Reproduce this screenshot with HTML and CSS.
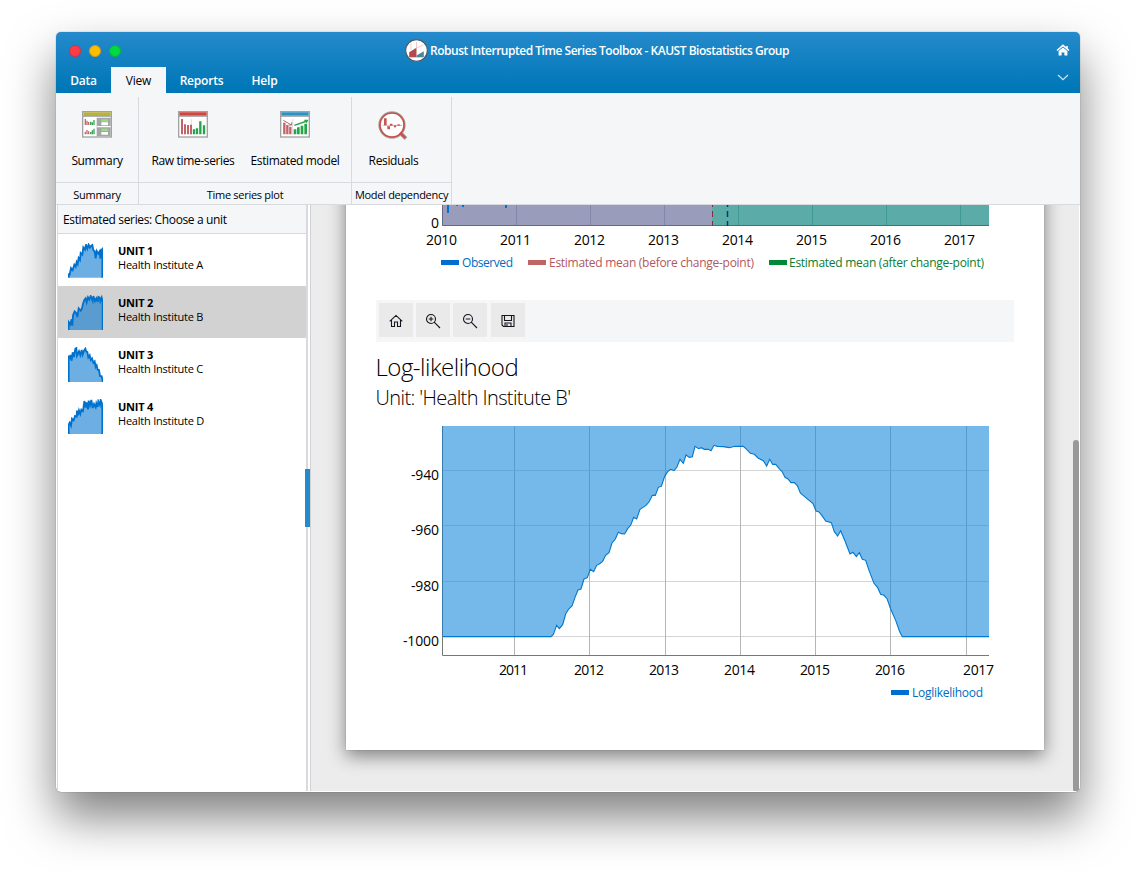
FILE: index.html
```html
<!DOCTYPE html>
<html lang="en">
<head>
<meta charset="utf-8">
<title>Robust Interrupted Time Series Toolbox</title>
<link rel="stylesheet" href="styles.css">
</head>
<body>
<div class="window">
  <header class="titlebar">
    <div class="title-row">
      <div class="lights"><i class="light red"></i><i class="light yellow"></i><i class="light green"></i></div>
      <div class="app-title">
        <svg class="logo" width="23" height="23" viewBox="0 0 66 66"><circle cx="33" cy="33" r="31" fill="#fff" stroke="#50555c" stroke-width="3"/><path d="M12 38L33 25V52H12Z" fill="#b04a50"/><path d="M33 47L54 35V52H33Z" fill="#4b8797"/><path d="M17 14v16M33 8v20M33 26l20-9" stroke="#e6b4b4" stroke-width="2" fill="none"/><path d="M11 53H54" stroke="#b9c0c5" stroke-width="2"/></svg>
        <span>Robust Interrupted Time Series Toolbox - KAUST Biostatistics Group</span>
      </div>
      <svg class="home" width="14" height="12" viewBox="0 0 14 12"><path d="M1 6.500L7 1.400l6 5.100M11 2v3" fill="none" stroke="#fff" stroke-width="1.600"/><path d="M2.600 7L7 3.400 11.400 7v4.600H8.400V8.500H5.600v3.100h-3z" fill="#fff"/></svg>
    </div>
    <nav class="tabs">
      <span class="tab data">Data</span><span class="tab active">View</span><span class="tab reports">Reports</span><span class="tab help">Help</span>
      <svg class="chevron" width="12" height="7" viewBox="0 0 12 7"><path d="M1 1l5 4.600L11 1" fill="none" stroke="#cfe6f5" stroke-width="1.200"/></svg>
    </nav>
  </header>

  <section class="ribbon">
    <div class="group g1">
      <div class="tools">
        <div class="tool">
          <svg width="30" height="27" viewBox="0 0 90 81"><rect x="2" y="2" width="86" height="76" fill="#fff" stroke="#a2a2a2" stroke-width="4"/><path d="M4 4h82v11H4z" fill="#b9b23c"/><path d="M3 16h84" stroke="#a2a2a2" stroke-width="3"/><path d="M44 20h42v56H44z" fill="#a5a5a5"/><path d="M45 47h41" stroke="#fff" stroke-width="4"/><path d="M58 25h20v7H58zM58 53h20v7H58z" fill="#8ae67c"/><path d="M58 34h20v9H58zM58 63h20v8H58z" fill="#fff"/><path d="M10 24v18M15 29v13M20 33v9M10 62v8M15 57v13M20 61v9" stroke="#c06a70" stroke-width="4"/><path d="M26 32v10M31 34v8M36 27v15M26 63v7M31 58v12M36 53v17" stroke="#37a455" stroke-width="4"/></svg>
          <span class="t1">Summary</span>
        </div>
      </div>
      <div class="caption c1">Summary</div>
    </div>
    <div class="group g2">
      <div class="tools">
        <div class="tool">
          <svg width="30" height="27" viewBox="0 0 90 81"><rect x="2" y="2" width="86" height="76" fill="#fff" stroke="#a2a2a2" stroke-width="4"/><path d="M4 4h82v10H4z" fill="#d0453f"/><path d="M3 16h84" stroke="#a2a2a2" stroke-width="3"/><path d="M40 24v48" stroke="#ccd" stroke-width="2"/><path d="M12 24v46M21 40v30M30 42v28M39 41v29" stroke="#c06468" stroke-width="6"/><path d="M48 55v15M57 52v18M67 31v39M78 43v27" stroke="#28a448" stroke-width="7"/></svg>
          <span class="t2">Raw time-series</span>
        </div>
        <div class="tool">
          <svg width="30" height="27" viewBox="0 0 90 81"><rect x="2" y="2" width="86" height="76" fill="#fff" stroke="#a2a2a2" stroke-width="4"/><path d="M4 4h82v10H4z" fill="#2c92c4"/><path d="M3 16h84" stroke="#a2a2a2" stroke-width="3"/><path d="M38 24v48" stroke="#ccd" stroke-width="2"/><path d="M13 35v35M22 42v28M31 47v23" stroke="#c06468" stroke-width="7"/><path d="M10 28l24 14m-8 0h9v-8" stroke="#c06468" stroke-width="3" fill="none"/><path d="M45 55v15M55 49v21M66 44v26M77 38v32" stroke="#28a448" stroke-width="8"/><path d="M43 43l38-13m-8-2h9l-3 7" stroke="#28a448" stroke-width="4" fill="none"/></svg>
          <span class="t3">Estimated model</span>
        </div>
      </div>
      <div class="caption c2">Time series plot</div>
    </div>
    <div class="group g3">
      <div class="tools">
        <div class="tool residuals">
          <svg width="30" height="30" viewBox="0 0 90 90"><path d="M67 66L84 83" stroke="#a8a39f" stroke-width="12"/><circle cx="42" cy="42" r="38" fill="#fff" stroke="#a8a39f" stroke-width="6"/><circle cx="42" cy="42" r="36" fill="none" stroke="#c5504b" stroke-width="5"/><path d="M66 65L82 81" stroke="#c5504b" stroke-width="7"/><path d="M14 43h58" stroke="#c8a0a4" stroke-width="2"/><path d="M22 22v21" stroke="#c5575a" stroke-width="8"/><path d="M26 43l6 8 6-11 8 4 5 5 7-7 12 2" stroke="#d09a9c" stroke-width="2" fill="none"/><path d="M28 46h8v9h-8zM36 38h7v6h-7zM48 43h6v6h-6zM59 40h6v4h-6z" fill="#c5575a"/></svg>
          <span class="t4">Residuals</span>
        </div>
      </div>
      <div class="caption c3">Model dependency</div>
    </div>
  </section>

  <main class="body">
    <aside class="sidebar">
      <div class="side-head"><span>Estimated series: Choose a unit</span></div>
      <div class="unit">
        <svg width="35" height="35" viewBox="54 113 105 105"><path class="spark" d="M56 217V207L59 208 63 188 68 194 73 178 77 184 80 170 83 176 86 158 90 164 92 143 97 148 100 126 105 133 108 117 112 130 116 118 120 127 124 121 127 119 130 134 134 138 137 159 140 137 145 145 149 138 151 160 153 135 157 131V217"/></svg>
        <div><b>UNIT 1</b><span>Health Institute A</span></div>
      </div>
      <div class="unit selected">
        <svg width="35" height="35" viewBox="54 269 105 105"><path class="spark" d="M56 374V350L61 357 65 342 67 361 69 330 74 318 78 322 82 335 86 309 92 316 96 309 99 295 103 284 107 279 110 291 114 276 118 283 122 272 128 287 130 272 135 287 139 279 143 290 145 275 149 277 151 288 155 277 158 291V374"/></svg>
        <div><b>UNIT 2</b><span>Health Institute B</span></div>
      </div>
      <div class="unit">
        <svg width="35" height="35" viewBox="54 425 105 105"><path class="spark" d="M56 530V455L59 458 61 449 65 466 68 441 72 455 76 430 79 428 81 451 87 438 91 450 95 434 98 448 102 436 106 430 109 439 112 440 115 456 119 450 122 464 126 459 130 472 134 468 137 485 140 480 143 493 147 494 150 512 155 513 158 527V530"/></svg>
        <div><b>UNIT 3</b><span>Health Institute C</span></div>
      </div>
      <div class="unit">
        <svg width="35" height="35" viewBox="54 581 105 105"><path class="spark" d="M56 686V658L59 652 63 661 66 640 71 645 75 632 80 634 81 616 84 630 87 615 91 626 94 613 99 617 103 587 107 607 109 591 114 612 116 586 120 600 124 584 128 608 132 596 137 606 139 594 143 605 145 588 150 599 152 584 156 594 157 619V686"/></svg>
        <div><b>UNIT 4</b><span>Health Institute D</span></div>
      </div>
    </aside>
    <div class="splitter"><i></i></div>

    <section class="content">
      <article class="page">
        <svg class="chart-a" width="698" height="80" viewBox="346 205 698 80">
          <path d="M442 205h270v21H442z" fill="#999dbb"/><path d="M712 205h277v21H712z" fill="#5baca8"/>
          <path d="M516.500 205v20M590.500 205v20M664.500 205v20" stroke="#8387a7"/>
          <path d="M738.500 205v20M812.500 205v20M886.500 205v20M960.500 205v20" stroke="#409892"/>
          <path d="M442.500 205v20.500H712" stroke="#656785" fill="none"/><path d="M712 225.500H989" stroke="#258079"/>
          <path d="M448 205v8M463 205v2M506 205v3M457 205v.7" stroke="#0072ce" stroke-width="2"/>
          <path d="M712.500 205v21" stroke="#7d2f43" stroke-dasharray="6 4" stroke-dashoffset="4"/>
          <path d="M727.500 205v21" stroke="#003f62" stroke-width="1.500" stroke-dasharray="6 4" stroke-dashoffset="4"/>
          <g class="axis"><text x="431" y="228" textLength="8">0</text>
          <text x="426" y="245" textLength="31">2010</text><text x="500" y="245" textLength="31">2011</text><text x="574" y="245" textLength="31">2012</text><text x="648" y="245" textLength="31">2013</text><text x="722" y="245" textLength="31">2014</text><text x="796" y="245" textLength="31">2015</text><text x="870" y="245" textLength="31">2016</text><text x="944" y="245" textLength="31">2017</text></g>
          <g class="legend"><path d="M441 260h18v5h-18z" fill="#006dd0"/><text x="462" y="267" textLength="51" fill="#006cbe">Observed</text>
          <path d="M528 260h18v5h-18z" fill="#c06468"/><text x="549" y="267" textLength="205" fill="#b0585d">Estimated mean (before change-point)</text>
          <path d="M769 260h18v5h-18z" fill="#008a36"/><text x="789" y="267" textLength="195" fill="#0b7c31">Estimated mean (after change-point)</text></g>
        </svg>
        <div class="chart-tools">
          <span><svg width="14" height="14" viewBox="0 0 14 14"><path d="M.7 7.400L7 1.400l6.300 6M2.500 6v6.500h3V8h3v4.500h3V6"/></svg></span>
          <span><svg width="16" height="16" viewBox="0 0 16 16"><circle cx="6" cy="6" r="4.500"/><path d="M9.200 9.200L15 15M3.700 6h4.600M6 3.700v4.600"/></svg></span>
          <span><svg width="16" height="16" viewBox="0 0 16 16"><circle cx="6" cy="6" r="4.500"/><path d="M9.200 9.200L15 15M3.700 6h4.600"/></svg></span>
          <span class="save"><svg width="14" height="14" viewBox="0 0 14 14"><path d="M1 1.500h12v11H2.500L1 11zM3.500 1.500v5h7v-5M4 12.500V9h6v3.500M6 10v2"/></svg></span>
        </div>
        <h1><span>Log-likelihood</span></h1>
        <h2><span>Unit: 'Health Institute B'</span></h2>
        <svg class="chart-b" width="698" height="300" viewBox="346 415 698 300">
          <path d="M442 470.500H989M442 525.500H989M442 581.500H989M442 636.500H989" stroke="#d5d5d5"/>
          <path d="M514.500 426V655M589.500 426V655M665.500 426V655M740.500 426V655M815.500 426V655M890.500 426V655M966.500 426V655" stroke="#b5b5b5"/>
          <g transform="translate(390 415) scale(.333333)">
            <path class="area" d="M156 33V665H483L490 658 500 631 508 641 518 629 527 597 536 582 546 573 555 547 564 525 573 522 582 492 592 488 601 463 611 470 620 451 629 446 638 439 647 421 657 413 666 384 676 372 685 352 694 356 704 357 713 341 722 331 731 307 740 312 750 283 759 277 768 271 777 261 787 241 796 241 805 217 814 214 824 184 833 170 842 163 852 167 861 156 870 133 880 145 888 120 898 127 907 125 915 94 926 101 934 98 943 103 955 103 963 107 972 91 982 94 1000 95 1018 98 1035 94 1060 94 1070 103 1081 115 1093 118 1104 129 1120 137 1130 153 1139 133 1148 148 1157 148 1167 160 1177 171 1185 187 1194 192 1203 203 1213 203 1222 212 1231 234 1250 250 1269 266 1278 288 1287 291 1296 302 1307 318 1324 323 1333 350 1343 363 1352 347 1365 378 1380 417 1389 412 1399 425 1408 413 1417 433 1427 436 1437 466 1452 505 1463 518 1472 538 1482 541 1491 551 1502 582 1517 616 1529 650 1537 665H1797V33Z"/>
            <path class="line" d="M156 665H483L490 658 500 631 508 641 518 629 527 597 536 582 546 573 555 547 564 525 573 522 582 492 592 488 601 463 611 470 620 451 629 446 638 439 647 421 657 413 666 384 676 372 685 352 694 356 704 357 713 341 722 331 731 307 740 312 750 283 759 277 768 271 777 261 787 241 796 241 805 217 814 214 824 184 833 170 842 163 852 167 861 156 870 133 880 145 888 120 898 127 907 125 915 94 926 101 934 98 943 103 955 103 963 107 972 91 982 94 1000 95 1018 98 1035 94 1060 94 1070 103 1081 115 1093 118 1104 129 1120 137 1130 153 1139 133 1148 148 1157 148 1167 160 1177 171 1185 187 1194 192 1203 203 1213 203 1222 212 1231 234 1250 250 1269 266 1278 288 1287 291 1296 302 1307 318 1324 323 1333 350 1343 363 1352 347 1365 378 1380 417 1389 412 1399 425 1408 413 1417 433 1427 436 1437 466 1452 505 1463 518 1472 538 1482 541 1491 551 1502 582 1517 616 1529 650 1537 665H1797"/>
          </g>
          <path d="M442.500 636V655.500H989" stroke="#777" fill="none"/><path d="M442.500 426V636" stroke="#3978aa"/>
          <g class="axis"><text x="411" y="480" textLength="28">-940</text><text x="411" y="535" textLength="28">-960</text><text x="411" y="591" textLength="28">-980</text><text x="403" y="646" textLength="36">-1000</text>
          <text x="499" y="675" textLength="29">2011</text><text x="574" y="675" textLength="30">2012</text><text x="649" y="675" textLength="30">2013</text><text x="724" y="675" textLength="31">2014</text><text x="800" y="675" textLength="30">2015</text><text x="875" y="675" textLength="30">2016</text><text x="963" y="675" textLength="31">2017</text></g>
          <g class="legend"><path d="M891 690h18v5h-18z" fill="#006dd0"/><text x="912" y="697" textLength="71" fill="#006cbe">Loglikelihood</text></g>
        </svg>
      </article>
      <i class="thumb"></i>
    </section>
  </main>
</div>
</body>
</html>
```
FILE: styles.css
```css
* { box-sizing: border-box; }
body {
  margin: 0;
  height: 872px;
  overflow: hidden;
  background: #fff;
  color: #000;
  font: 12px/16px "Open Sans", "Noto Sans", sans-serif;
  white-space: nowrap;
}
svg { display: block; flex: none; }

.window {
  display: flex;
  flex-direction: column;
  width: 1024px;
  height: 760px;
  margin: 32px 56px;
  border-radius: 5px;
  overflow: hidden;
  background: #fff;
  box-shadow: 0 25px 48px rgba(0, 0, 0, .5), 0 0 1px rgba(0, 0, 0, .6);
}

.titlebar { height: 61px; background: linear-gradient(#258acb, #0078b8 90%); color: #fff; }
.title-row { display: flex; align-items: center; height: 35px; padding: 2px 10px 0 13px; }
.lights { display: flex; gap: 8px; width: 336px; }
.light { width: 12px; height: 12px; border-radius: 50%; border: 1px solid; }
.red { background: #ff3b47; border-color: #d8303c; }
.yellow { background: #ffbd00; border-color: #d79e15; }
.green { background: #00d940; border-color: #13b03c; }
.app-title { display: flex; align-items: center; gap: 2px; font-weight: 600; letter-spacing: -.48px; }
.home { margin: 0 0 2px auto; }
.tabs { display: flex; align-items: flex-end; height: 26px; padding-right: 10px; font-weight: 600; letter-spacing: -.2px; }
.tab { height: 26px; line-height: 28px; text-align: center; }
.data { width: 55px; }
.active { width: 55px; background: #f4f6f8; color: #000; font-weight: 400; }
.reports { width: 71px; }
.help { width: 55px; }
.chevron { margin: 0 1px 12px auto; }

.ribbon { display: flex; height: 112px; padding-top: 4px; background: #f4f6f8; border-bottom: 1px solid #d8dadd; }
.group { display: flex; flex-direction: column; border-right: 1px solid #d8dadd; }
.g1 { width: 83px; }
.g2 { width: 213px; }
.g3 { width: 100px; }
.tools { display: flex; height: 86px; padding-top: 15px; border-bottom: 1px solid #d8dadd; letter-spacing: -.36px; }
.tool { display: flex; flex-direction: column; justify-content: space-between; align-items: center; height: 57px; }
.tool svg { margin-top: -1px; }
.g1 .tool { width: 82px; }
.g2 .tool:first-child { width: 108px; }
.g2 .tool:last-child { width: 96px; }
.g3 .tool { width: 83px; }
.residuals svg { margin-left: -1px; }
.caption { height: 21px; line-height: 24px; text-align: center; font-size: 11px; letter-spacing: -.28px; }
.c3 { letter-spacing: -.3px; }

.body { display: flex; flex: 1; min-height: 0; padding: 0 1px 1px; }
.sidebar { width: 251px; border: solid #d8dadd; border-width: 0 2px 0 1px; background: #fff; }
.side-head { height: 29px; padding-left: 5px; line-height: 29px; background: #f4f6f8; border-bottom: 1px solid #d8dadd; letter-spacing: -.36px; }
.unit { display: flex; gap: 15px; height: 52px; padding: 9px 10px 0; }
.unit div { display: flex; flex-direction: column; padding-top: 1px; font-size: 11px; line-height: 14px; letter-spacing: -.22px; }
.selected { background: #d2d2d2; }
.spark { fill: rgba(0, 114, 206, .57); stroke: #0072ce; stroke-width: 5.5; }
.splitter { display: flex; align-items: center; width: 3px; border-right: 1px solid #d0d2d4; }
.splitter i { flex: none; width: 5px; height: 58px; margin-left: -3px; background: #258acb; position: relative; z-index: 1; }

.content { display: flex; flex: 1; justify-content: space-between; overflow: hidden; background: #ececec; padding-left: 35px; }
.page { width: 698px; height: 585px; margin-top: -40px; padding-top: 40px; background: #fff; box-shadow: 0 6px 17px rgba(0, 0, 0, .46), 0 0 1px rgba(0, 0, 40, .3); }
.thumb { width: 6px; height: 352px; margin-top: 235px; background: #999; border-radius: 3px; }
.chart-tools { display: flex; gap: 3px; width: 638px; height: 42px; margin: 15px 30px 0; padding: 3px; background: #f4f6f8; }
.chart-tools span { display: flex; align-items: center; justify-content: center; width: 34px; height: 34px; padding-top: 2px; background: #eaeaea; }
.chart-tools .save { margin-left: 1px; padding-right: 1px; }
.chart-tools svg { fill: none; stroke: #171420; stroke-width: 1.1; }
h1, h2 { margin: 0 30px 0 29.5px; font-weight: 300; }
h1 { height: 42px; font-size: 24px; line-height: 49px; letter-spacing: -.5px; }
h2 { height: 31px; font-size: 20px; line-height: 28px; letter-spacing: -.6px; }
.axis { font-size: 14px; }
.legend { font-size: 12px; }
.area { fill: rgba(25, 136, 220, .6); }
.line { fill: none; stroke: #0078d0; stroke-width: 3.3; }
```
